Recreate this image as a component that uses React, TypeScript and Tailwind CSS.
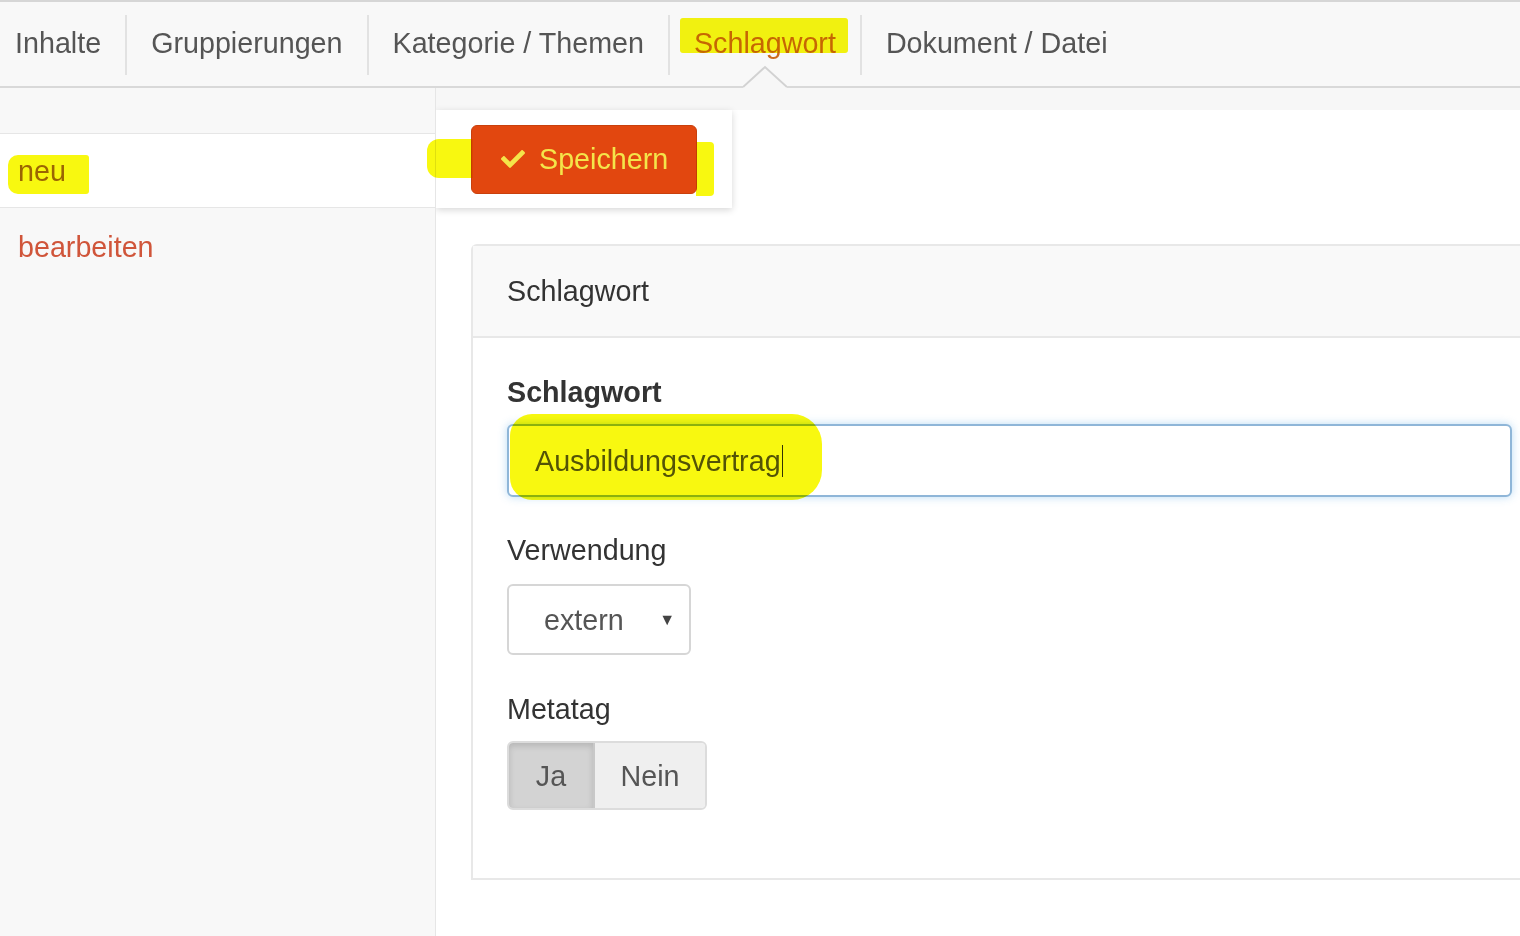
import React from "react";
import { FaCheck } from "react-icons/fa";

const tabs = ["Inhalte", "Gruppierungen", "Kategorie / Themen", "Schlagwort", "Dokument / Datei"];

export default function App() {
  return (
    <div className="relative w-[1520px] h-[936px] overflow-hidden bg-white font-['Liberation_Sans',Arial,sans-serif] text-[28.7px] leading-[32px]">
      <div className="h-[2px] bg-[#d6d6d6]" />
      <nav className="relative flex h-[86px] items-start bg-[#f8f8f8] border-b-2 border-[#d9d9d9]">
        {tabs.map((t, i) => (
          <React.Fragment key={t}>
            {i > 0 && <div className="mt-[13px] h-[60px] w-[2px] bg-[#e2e2e2]" />}
            <div
              className={
                (i === 0 ? "pl-[15px] pr-[24px] " : "px-[24px] ") +
                "pt-[25px] whitespace-nowrap " +
                (t === "Schlagwort" ? "text-[#cc6a1e]" : "text-[#555555]")
              }
            >
              {t}
            </div>
          </React.Fragment>
        ))}
      </nav>
      <svg className="absolute left-[743px] top-[65px]" width="44" height="28" viewBox="0 0 44 28">
        <polygon points="0,22 22,2 44,22 44,28 0,28" fill="#f7f7f7" />
        <polyline points="0,22 22,2 44,22" fill="none" stroke="#d2d2d2" strokeWidth="2" />
      </svg>

      <div className="flex h-[848px]">
        <aside className="w-[436px] shrink-0 bg-[#f8f8f8] border-r border-[#e6e6e6] pt-[45px]">
          <div className="flex h-[75px] items-center border-y border-[#e6e6e6] bg-white pl-[18px] text-[#a0681a]">
            neu
          </div>
          <div className="flex h-[78px] items-center pl-[18px] text-[#d0553a]">bearbeiten</div>
        </aside>

        <main className="flex-1 overflow-hidden bg-[#f7f7f7] pt-[22px]">
          <div className="h-full bg-white">
            <div className="flex h-[98px] w-[296px] items-center bg-white pl-[35px] shadow-[0_2px_7px_rgba(0,0,0,0.16)]">
              <div className="flex h-[69px] w-[226px] items-center gap-[13px] rounded-[6px] border border-[#c9400c] bg-[#e2470f] pl-[28px] text-[#f4e54a]">
                <FaCheck className="h-[24px] w-[26px]" />
                <span>Speichern</span>
              </div>
            </div>

            <div className="ml-[35px] mt-[36px] w-[1080px] rounded-tl-[6px] border-2 border-r-0 border-[#e8e8e8]">
              <div className="flex h-[92px] items-center border-b-2 border-[#e8e8e8] bg-[#f9f9f9] pl-[34px] text-[#333333]">
                Schlagwort
              </div>
              <div className="pl-[34px] pt-[38px] pb-[68px]">
                <div className="font-bold text-[#333333]">Schlagwort</div>
                <div className="mt-[16px] flex h-[73px] w-[1005px] items-center rounded-[6px] border-2 border-[#8fb6d8] bg-white pl-[26px] text-[#555555] shadow-[0_0_8px_rgba(102,175,233,0.45)]">
                  <span>Ausbildungsvertrag</span>
                  <span className="ml-[1px] h-[32px] w-[1.5px] bg-[#333333]" />
                </div>

                <div className="mt-[37px] text-[#333333]">Verwendung</div>
                <div className="mt-[18px] flex h-[71px] w-[184px] items-center justify-between rounded-[6px] border-2 border-[#d6d6d6] bg-white pl-[35px] pr-[14px] text-[#555555]">
                  <span>extern</span>
                  <span className="text-[16px] text-[#444444]">▼</span>
                </div>

                <div className="mt-[38px] text-[#333333]">Metatag</div>
                <div className="mt-[16px] flex h-[69px] w-[200px] overflow-hidden rounded-[6px] border-2 border-[#dcdcdc] text-[#555555]">
                  <div className="flex w-[86px] items-center justify-center bg-[#d3d3d3] shadow-[inset_0_3px_6px_rgba(0,0,0,0.14)] border-r-2 border-[#c8c8c8]">
                    Ja
                  </div>
                  <div className="flex flex-1 items-center justify-center bg-[#efefef]">Nein</div>
                </div>
              </div>
            </div>
          </div>
        </main>
      </div>

      {/* marker highlights */}
      <div className="pointer-events-none absolute left-[680px] top-[18px] h-[35px] w-[168px] rounded-[3px] bg-[#f8f810] mix-blend-multiply" />
      <div className="pointer-events-none absolute left-[8px] top-[155px] h-[39px] w-[81px] rounded-l-[10px] rounded-r-[3px] bg-[#f8f810] mix-blend-multiply" />
      <div className="pointer-events-none absolute left-[427px] top-[139px] h-[39px] w-[46px] rounded-l-[12px] bg-[#f8f810] mix-blend-multiply" />
      <div className="pointer-events-none absolute left-[696px] top-[142px] h-[54px] w-[18px] rounded-r-[4px] bg-[#f8f810] mix-blend-multiply" />
      <div className="pointer-events-none absolute left-[510px] top-[414px] h-[86px] w-[312px] rounded-l-[22px] rounded-r-[30px] bg-[#f8f810] mix-blend-multiply" />
    </div>
  );
}
